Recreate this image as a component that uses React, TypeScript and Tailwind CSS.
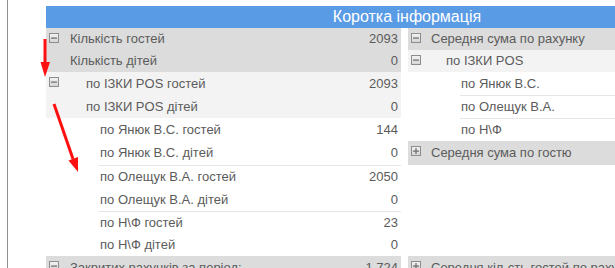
import React from "react";

const Minus = () => (
  <svg width="10" height="10" viewBox="0 0 10 10" className="block">
    <defs>
      <linearGradient id="gm" x1="0" y1="0" x2="0" y2="1">
        <stop offset="0" stopColor="#f4f4f4" />
        <stop offset="1" stopColor="#d4d4d4" />
      </linearGradient>
    </defs>
    <rect x="0.5" y="0.5" width="9" height="9" fill="url(#gm)" stroke="#8d8d8d" />
    <rect x="2" y="4.5" width="6" height="1.2" fill="#6a6a6a" />
  </svg>
);

const Plus = () => (
  <svg width="10" height="10" viewBox="0 0 10 10" className="block">
    <defs>
      <linearGradient id="gp" x1="0" y1="0" x2="0" y2="1">
        <stop offset="0" stopColor="#f4f4f4" />
        <stop offset="1" stopColor="#d4d4d4" />
      </linearGradient>
    </defs>
    <rect x="0.5" y="0.5" width="9" height="9" fill="url(#gp)" stroke="#8d8d8d" />
    <rect x="2" y="4.5" width="6" height="1.2" fill="#6a6a6a" />
    <rect x="4.4" y="2" width="1.2" height="6" fill="#6a6a6a" />
  </svg>
);

type Row = {
  label: string;
  value?: string;
  h: string;
  bg: string;
  icon?: "minus" | "plus";
  indent: string;
  line?: string;
};

const H = ["h-[22px]", "h-[22px]", "h-[23px]", "h-[23px]", "h-[23px]", "h-[24px]", "h-[23px]", "h-[23px]", "h-[23px]", "h-[22px]", "h-[23px]"];

const leftRows: Row[] = [
  { label: "Кількість гостей", value: "2093", h: H[0], bg: "bg-[#dcdcdc]", icon: "minus", indent: "pl-[24px]" },
  { label: "Кількість дітей", value: "0", h: H[1], bg: "bg-[#dcdcdc]", indent: "pl-[24px]" },
  { label: "по ІЗКИ POS гостей", value: "2093", h: H[2], bg: "bg-[#f3f3f3]", icon: "minus", indent: "pl-[40px]" },
  { label: "по ІЗКИ POS дітей", value: "0", h: H[3], bg: "bg-[#f3f3f3]", indent: "pl-[40px]" },
  { label: "по Янюк В.С. гостей", value: "144", h: H[4], bg: "bg-white", indent: "pl-[54px]" },
  { label: "по Янюк В.С. дітей", value: "0", h: H[5], bg: "bg-white", indent: "pl-[54px]" },
  { label: "по Олещук В.А. гостей", value: "2050", h: H[6], bg: "bg-white", indent: "pl-[54px]", line: "ml-[53px]" },
  { label: "по Олещук В.А. дітей", value: "0", h: H[7], bg: "bg-white", indent: "pl-[54px]" },
  { label: "по Н\\Ф гостей", value: "23", h: H[8], bg: "bg-white", indent: "pl-[54px]", line: "ml-[53px]" },
  { label: "по Н\\Ф дітей", value: "0", h: H[9], bg: "bg-white", indent: "pl-[54px]" },
  { label: "Закритих рахунків за період:", value: "1 724", h: H[10], bg: "bg-[#dcdcdc]", icon: "minus", indent: "pl-[24px]" },
];

const RowView = ({ r }: { r: Row }) => (
  <div className={`relative ${r.h} ${r.bg} flex items-center`}>
    {r.line && <div className={`absolute top-0 left-0 right-0 h-px bg-[#e6e6e6] ${r.line}`} />}
    {r.icon && (
      <div className="absolute left-[3px] top-[5px]">{r.icon === "minus" ? <Minus /> : <Plus />}</div>
    )}
    <div className={`flex-1 ${r.indent} whitespace-nowrap text-[#5b5b5b]`}>{r.label}</div>
    {r.value !== undefined && <div className="pr-[3px] text-[#5b5b5b] whitespace-nowrap">{r.value}</div>}
  </div>
);

const rightRows: Row[] = [
  { label: "Середня сума по рахунку", h: H[0], bg: "bg-[#dcdcdc]", icon: "minus", indent: "pl-[23px]" },
  { label: "по ІЗКИ POS", h: H[1], bg: "bg-[#f3f3f3]", icon: "minus", indent: "pl-[38px]" },
  { label: "по Янюк В.С.", h: H[2], bg: "bg-white", indent: "pl-[53px]" },
  { label: "по Олещук В.А.", h: H[3], bg: "bg-white", indent: "pl-[53px]", line: "ml-[52px]" },
  { label: "по Н\\Ф", h: H[4], bg: "bg-white", indent: "pl-[53px]", line: "ml-[52px]" },
  { label: "Середня сума по гостю", h: H[5], bg: "bg-[#dcdcdc]", icon: "plus", indent: "pl-[23px]" },
];

export default function App() {
  return (
    <div
      className="relative w-[615px] h-[268px] overflow-hidden bg-white flex text-[13px]"
      style={{ fontFamily: '"Liberation Sans", Arial, sans-serif' }}
    >
      <div className="w-[7px] shrink-0" />
      <div className="w-px shrink-0 bg-[#8f8f8f]" />
      <div className="ml-[38px] pt-[6px] flex flex-col shrink-0">
        <div className="w-[722px] h-[22px] bg-[#5a9be6] text-white text-[16px] leading-[22px] text-center">
          Коротка інформація
        </div>
        <div className="flex gap-[7px]">
          <div className="w-[355px] shrink-0 flex flex-col">
            {leftRows.map((r, i) => (
              <RowView key={i} r={r} />
            ))}
          </div>
          <div className="w-[360px] shrink-0 flex flex-col">
            {rightRows.map((r, i) => (
              <RowView key={i} r={r} />
            ))}
            <div className="h-[91px]" />
            <RowView
              r={{
                label: "Середня кіл-сть гостей по рахунку",
                h: "h-[23px]",
                bg: "bg-[#dcdcdc]",
                icon: "plus",
                indent: "pl-[23px]",
              }}
            />
          </div>
        </div>
      </div>
      <svg className="absolute left-0 top-0 pointer-events-none" width="615" height="268">
        <line x1="45" y1="39" x2="45" y2="63" stroke="#ff1010" strokeWidth="3" />
        <polygon points="40.5,62 50,62 45,77" fill="#ff1010" />
        <line x1="54" y1="104" x2="73" y2="159" stroke="#ff1010" strokeWidth="3" />
        <polygon points="78,157 68.5,160.5 78,172" fill="#ff1010" />
      </svg>
    </div>
  );
}
